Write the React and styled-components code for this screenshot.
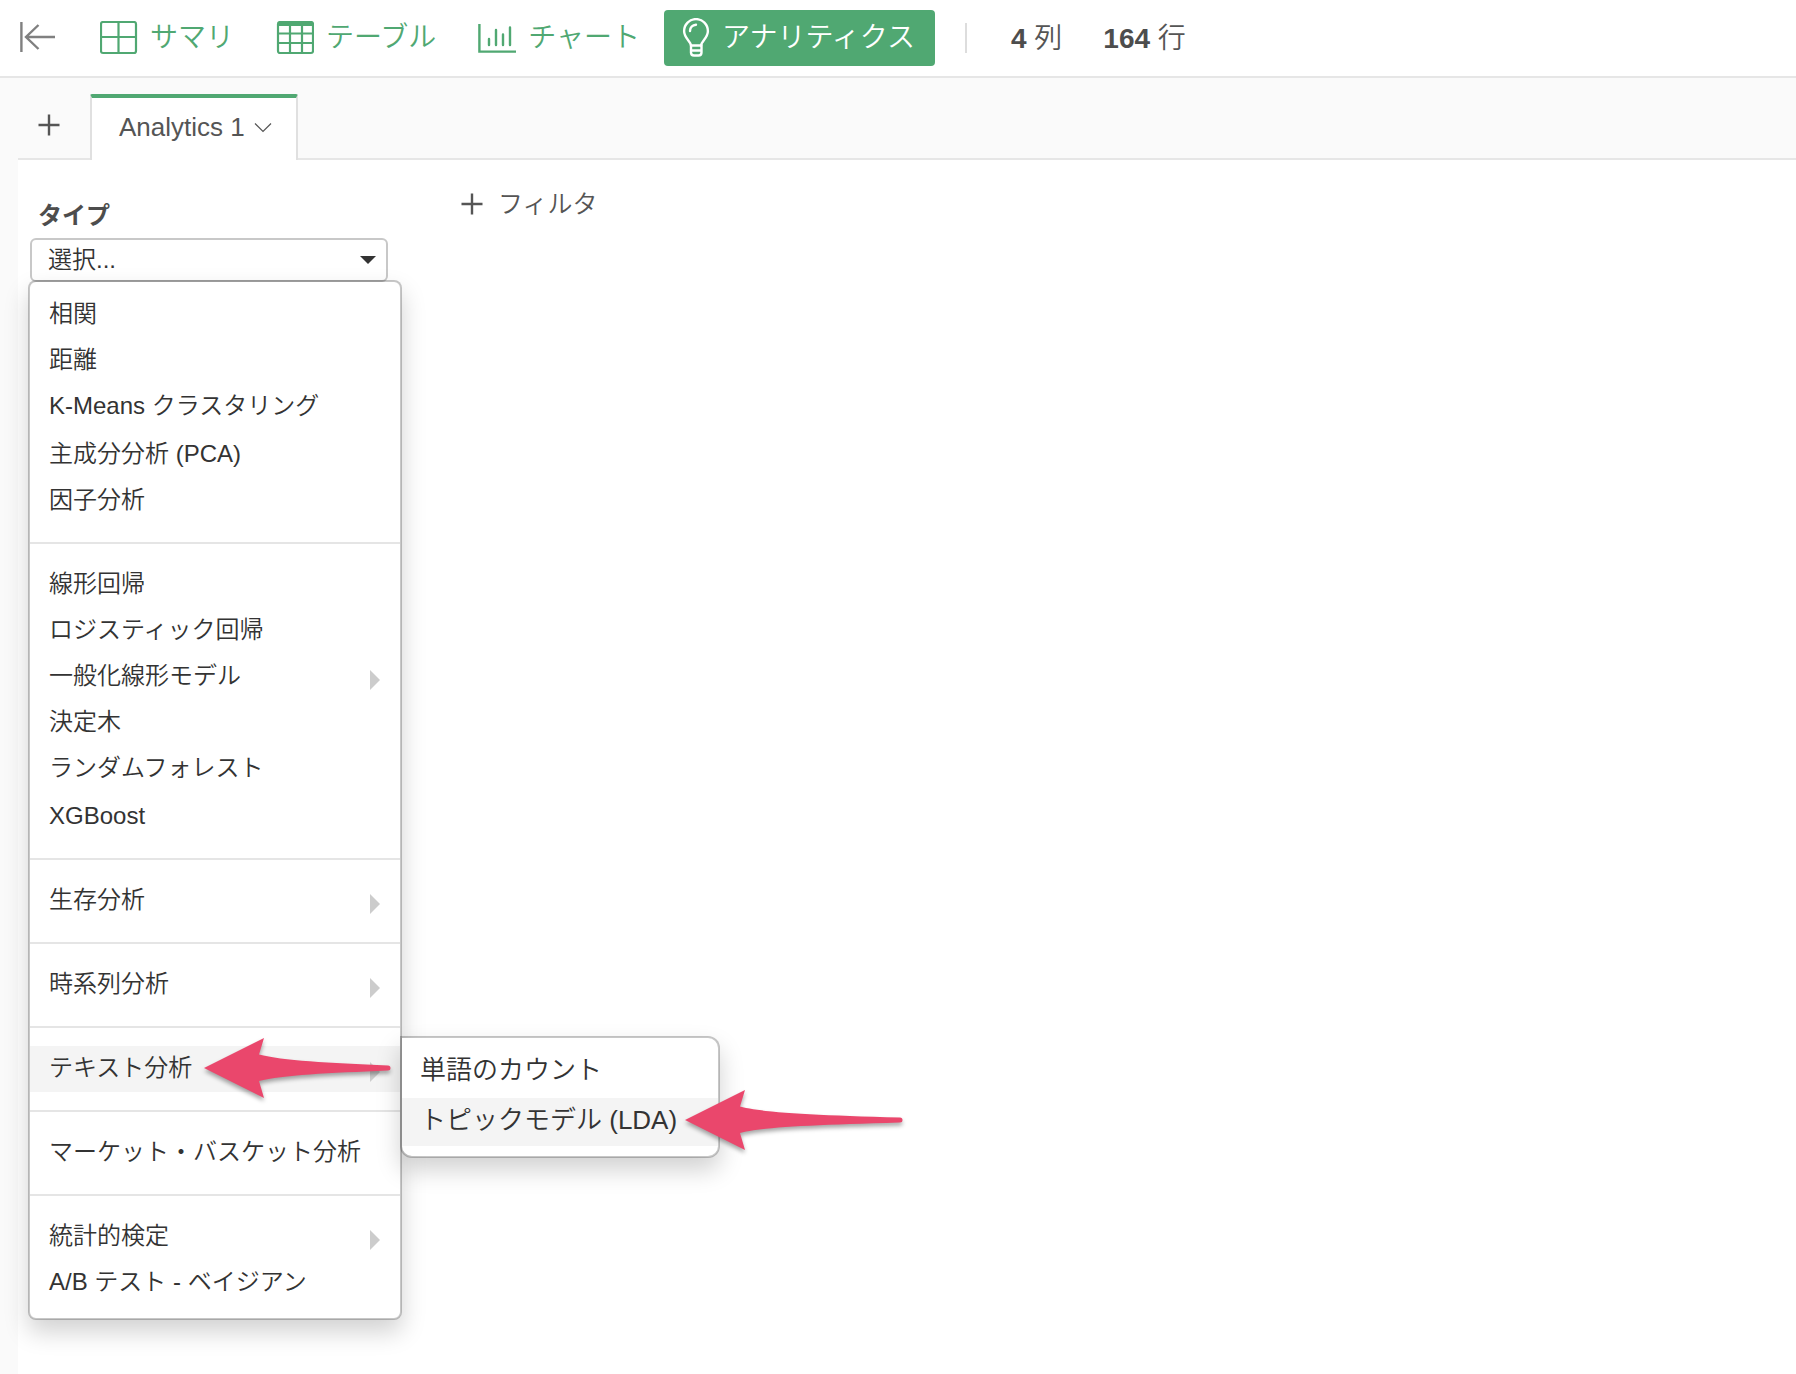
import React, { useState } from "react";

import styled, { createGlobalStyle } from "styled-components";

const menuGroups = [
    [
        { label: "相関" },
        { label: "距離" },
        { label: "K-Means クラスタリング", mixed: true },
        { label: "主成分分析 (PCA)" },
        { label: "因子分析" }
    ],
    [
        { label: "線形回帰" },
        { label: "ロジスティック回帰" },
        { label: "一般化線形モデル", more: true },
        { label: "決定木" },
        { label: "ランダムフォレスト" },
        { label: "XGBoost", mixed: true, latin: true }
    ],
    [{ label: "生存分析", more: true }],
    [{ label: "時系列分析", more: true }],
    [{ label: "テキスト分析", more: true, children: ["単語のカウント", "トピックモデル (LDA)"] }],
    [{ label: "マーケット・バスケット分析" }],
    [
        { label: "統計的検定", more: true },
        { label: "A/B テスト - ベイジアン", mixed: true }
    ]
];

function BackIcon() {
    return (
        <svg width="36" height="32" viewBox="0 0 36 32" fill="none" stroke="#808080" strokeWidth="2.4">
            <path d="M1.4 0v30M35 15H6M18.500 3L6 15l12.500 12" />
        </svg>
    );
}

function SummaryIcon() {
    return (
        <svg width="38" height="34" viewBox="0 0 38 34" fill="none" stroke="currentColor" strokeWidth="2.2">
            <rect x="1" y="1" width="35" height="31" rx="2" />
            <path d="M18.5 1v31M1 16h35" />
        </svg>
    );
}

function TableIcon() {
    return (
        <svg width="38" height="34" viewBox="0 0 38 34" fill="none" stroke="currentColor" strokeWidth="2.2">
            <rect x="2" y="1" width="35" height="31" rx="2" />
            <path d="M2 3h35" strokeWidth="4" />
            <path d="M2 12.5h35M2 22h35M14 3v29M26 3v29" />
        </svg>
    );
}

function ChartIcon() {
    return (
        <svg width="38" height="34" viewBox="0 0 38 34" fill="none" stroke="currentColor" strokeWidth="2.4">
            <path d="M1.4 3v27.6H38" />
            <path d="M11 18V24M18 9V24M25 13.500V24M32 6.500V24" strokeLinecap="round" />
        </svg>
    );
}

function BulbIcon() {
    return (
        <svg width="28" height="40" viewBox="0 0 28 40" fill="none" stroke="currentColor" strokeWidth="2.4" strokeLinecap="round">
            <path d="M9 27.5c0-4-6.900-7.200-6.900-14.500a11.900 11.900 0 0 1 23.800 0C25.900 20.300 19 23.500 19 27.500" />
            <path d="M8 13c0-3.500 2.500-6 6-6.300" />
            <path d="M9 27.500h10.500v7c0 2-1.500 3-3 3h-4.500c-1.500 0-3-1-3-3zM9.500 32.500h9.500" />
        </svg>
    );
}

function PlusIcon() {
    return (
        <svg width="22" height="22" viewBox="0 0 22 22" stroke="currentColor" strokeWidth="2.4">
            <path d="M11 .5v21M.5 11h21" />
        </svg>
    );
}

function ChevronIcon() {
    return (
        <svg width="18" height="12" viewBox="0 0 18 12" fill="none" stroke="currentColor" strokeWidth="1.2">
            <path d="M1 2.500l8 8 8-8" />
        </svg>
    );
}

function Arrow({ length, ...rest }) {
    return (
        <Pointer width={length} height="60" viewBox={`0 0 ${length} 60`} fill="#ea476c" aria-hidden="true" {...rest}>
            <path d={`M0 30L60 0L55 16.500C78 22.500 125 25 ${length - 3} 27.500a2.500 2.500 0 0 1 0 5C125 35 78 37 55 43L60 60Z`} />
        </Pointer>
    );
}

function TypeMenu() {
    return (
        <Menu>
            {menuGroups.map((group, index) => (
                <Group key={index}>
                    {group.map(item => (
                        <Item key={item.label}>
                            <ItemButton type="button" $mixed={item.mixed} $latin={item.latin} $active={!!item.children}>
                                {item.label}
                                {item.more && <MoreMark />}
                            </ItemButton>
                            {item.children &&
                                <>
                                    <SubMenu>
                                        {item.children.map((child, i) => (
                                            <Item key={child}>
                                                <SubButton type="button" $active={i === 1}>{child}</SubButton>
                                                {i === 1 && <Arrow length={218} $left={283} />}
                                            </Item>
                                        ))}
                                    </SubMenu>
                                    <Arrow length={187} $left={174} />
                                </>
                            }
                        </Item>
                    ))}
                </Group>
            ))}
        </Menu>
    );
}

function App() {
    const [type, setType] = useState("");

    const handleChange = (e) => {
        setType(e.target.value);
    };

    return (
        <Page>
            <GlobalStyle />
            <Header>
                <BackButton type="button" aria-label="戻る"><BackIcon /></BackButton>
                <Views>
                    <ViewButton type="button"><SummaryIcon />サマリ</ViewButton>
                    <ViewButton type="button"><TableIcon />テーブル</ViewButton>
                    <ViewButton type="button"><ChartIcon />チャート</ViewButton>
                    <ViewButton type="button" $active><BulbIcon />アナリティクス</ViewButton>
                </Views>
                <Divider />
                <Counts>
                    <span><b>4</b> 列</span>
                    <span><b>164</b> 行</span>
                </Counts>
            </Header>
            <TabBar>
                <AddButton type="button" aria-label="追加"><PlusIcon /></AddButton>
                <Tab type="button">Analytics 1<ChevronIcon /></Tab>
            </TabBar>
            <Content>
                <Settings>
                    <Label htmlFor="type">タイプ</Label>
                    <SelectBox>
                        <Select id="type" value={type} onChange={handleChange}>
                            <option value="">選択...</option>
                            {menuGroups.flat().map(item => (
                                <option key={item.label} value={item.label}>{item.label}</option>
                            ))}
                        </Select>
                        <Caret />
                        <TypeMenu />
                    </SelectBox>
                </Settings>
                <FilterButton type="button"><PlusIcon />フィルタ</FilterButton>
            </Content>
        </Page>
    );
}

export default App;

const GlobalStyle = createGlobalStyle`
  * {
    box-sizing: border-box;
  }
  body {
    margin: 0;
    background-color: #ffffff;
  }
  body, button, select {
    font-family: "Liberation Sans", "Noto Sans CJK JP", sans-serif;
    font-weight: 350;
  }
  button {
    margin: 0;
    padding: 0;
    border: none;
    background: none;
    color: inherit;
    text-align: left;
    white-space: nowrap;
    cursor: pointer;
  }
  svg {
    flex: none;
    display: block;
  }
`
const Page = styled.div`
  display: flex;
  flex-direction: column;
  min-height: 100vh;
  color: #555555;
`
const Header = styled.header`
  display: flex;
  align-items: center;
  height: 78px;
  padding-left: 20px;
  border-bottom: 2px solid #e6e6e6;
  font-size: 28px;
`
const BackButton = styled.button`
  width: 62px;
`
const Views = styled.nav`
  display: flex;
  gap: 8px;
`
const ViewButton = styled.button`
  display: flex;
  align-items: center;
  gap: 12px;
  height: 56px;
  padding: 0 ${props => props.$active ? "20px" : "16px"} 0 18px;
  border-radius: 4px;
  font-size: 28px;
  line-height: 60px;
  color: ${props => props.$active ? "#ffffff" : "#50a872"};
  background-color: ${props => props.$active ? "#50a872" : "transparent"};
`
const Divider = styled.div`
  width: 2px;
  height: 30px;
  margin: 0 44px 0 30px;
  background-color: #dddddd;
`
const Counts = styled.div`
  display: flex;
  gap: 41px;
  line-height: 56px;
  padding-top: 2px;

  b {
    font-weight: 700;
    color: #4d4d4d;
  }
`
const TabBar = styled.div`
  display: flex;
  align-items: flex-end;
  height: 82px;
  padding-left: 18px;
  background: linear-gradient(#e6e6e6, #e6e6e6) 18px 100% / 100% 2px no-repeat #fafafa;
`
const AddButton = styled.button`
  width: 72px;
  height: 68px;
  padding: 0 0 2px 20px;
`
const Tab = styled.button`
  display: flex;
  align-items: center;
  gap: 9px;
  height: 66px;
  padding: 0 24px 4px 27px;
  border: 2px solid #e0e0e0;
  border-top: 4px solid #50a872;
  border-bottom: none;
  border-radius: 2px 2px 0 0;
  background-color: #ffffff;
  font-size: 26px;
`
const Content = styled.main`
  flex: 1;
  display: flex;
  align-items: flex-start;
  gap: 73px;
  padding: 24px 12px;
  border-left: 18px solid #fafafa;
`
const Settings = styled.section`
  width: 358px;
  padding-top: 8px;
`
const Label = styled.label`
  display: block;
  padding: 2px 0 0 8px;
  font-size: 24px;
  font-weight: 700;
  line-height: 44px;
  color: #4d4d4d;
`
const SelectBox = styled.div`
  position: relative;
`
const Select = styled.select`
  display: block;
  appearance: none;
  width: 100%;
  height: 44px;
  padding: 0 40px 2px 16px;
  border: 2px solid #c8c8c8;
  border-radius: 6px;
  background-color: #ffffff;
  font-size: 24px;
  color: #333333;
`
const Caret = styled.span`
  position: absolute;
  top: 18px;
  right: 12px;
  border: 8px solid transparent;
  border-top-color: #333333;
  border-bottom-width: 0;
  pointer-events: none;
`
const menuFrame = `
  position: absolute;
  z-index: 1;
  margin: 0;
  list-style: none;
  border: 2px solid rgba(0, 0, 0, 0.22);
  background-color: #ffffff;
  background-clip: padding-box;
  box-shadow: 0 12px 24px rgba(0, 0, 0, 0.18);
  color: #333333;
`
const Menu = styled.div`
  ${menuFrame}
  top: calc(100% - 2px);
  left: -2px;
  width: 374px;
  padding: 10px 0;
  border-radius: 8px;
`
const Group = styled.ul`
  margin: 0;
  padding: 0;
  list-style: none;

  & + & {
    margin-top: 18px;
    padding-top: 18px;
    border-top: 2px solid #e5e5e5;
  }
`
const Item = styled.li`
  position: relative;
`
const ItemButton = styled.button`
  display: flex;
  justify-content: space-between;
  width: 100%;
  height: ${props => props.$mixed ? "48px" : "46px"};
  padding: 0 20px 0 19px;
  background-color: ${props => props.$active ? "#f4f4f4" : "transparent"};
  font-size: 24px;
  line-height: ${props => props.$latin ? "48px" : "44px"};
`
const MoreMark = styled.span`
  margin-top: 16px;
  height: 20px;
  border: 10px solid transparent;
  border-left-color: #cccccc;
  border-right-width: 0;
`
const SubMenu = styled.ul`
  ${menuFrame}
  top: -10px;
  left: 370px;
  display: flex;
  flex-direction: column;
  gap: 2px;
  width: 320px;
  padding: 10px 0;
  border-radius: 0 12px 12px 12px;
`
const SubButton = styled.button`
  display: block;
  width: 100%;
  height: 48px;
  padding: 0 18px 4px;
  background-color: ${props => props.$active ? "#f4f4f4" : "transparent"};
  font-size: 26px;
  line-height: 44px;
`
const Pointer = styled.svg`
  position: absolute;
  z-index: 2;
  top: -8px;
  left: ${props => props.$left}px;
  overflow: visible;
  filter: drop-shadow(0 3px 2px rgba(0, 0, 0, 0.35));
  pointer-events: none;
`
const FilterButton = styled.button`
  display: flex;
  align-items: center;
  gap: 15px;
  font-size: 25px;
  line-height: 40px;
`
